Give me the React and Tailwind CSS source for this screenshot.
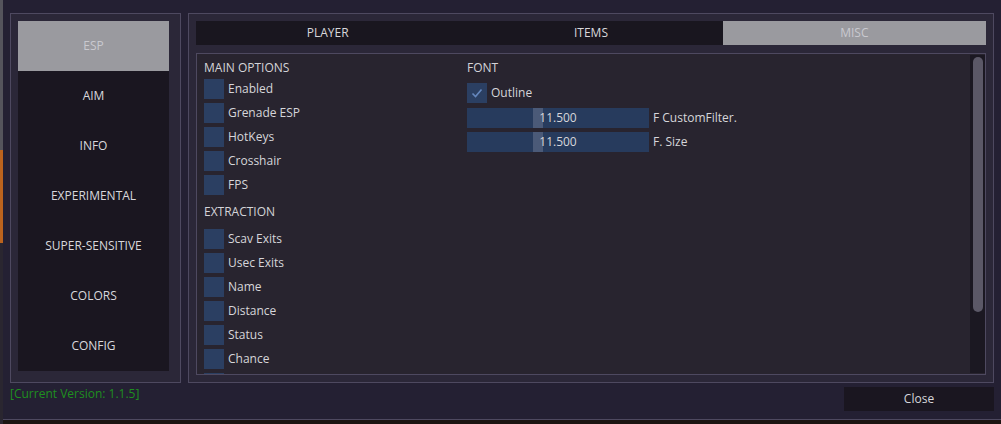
const NAV = ["ESP", "AIM", "INFO", "EXPERIMENTAL", "SUPER-SENSITIVE", "COLORS", "CONFIG"];
const TABS = ["PLAYER", "ITEMS", "MISC"];
const MAIN = ["Enabled", "Grenade ESP", "HotKeys", "Crosshair", "FPS"];
const EXTRACTION = ["Scav Exits", "Usec Exits", "Name", "Distance", "Status", "Chance"];

const Check = ({ label, checked }) => (
  <div className="flex items-center gap-[4px] h-[20px] shrink-0">
    <div className="w-[20px] h-[20px] bg-[#2b3f62] flex items-center justify-center shrink-0">
      {checked && (
        <svg width="14" height="14" viewBox="0 0 14 14">
          <path d="M2.5 7.5 L5.5 10.5 L11.5 3.5" fill="none" stroke="#6587bd" strokeWidth="1.6" />
        </svg>
      )}
    </div>
    {label && <span className="text-[12px] leading-[16px] text-[#d6d6da]">{label}</span>}
  </div>
);

const Slider = ({ value, label }) => (
  <div className="flex items-center gap-[4px] h-[20px]">
    <div className="relative w-[182px] h-[20px] bg-[#273b5d] flex items-center justify-center">
      <div className="absolute left-[66px] top-0 w-[10px] h-[20px] bg-[#4b5a78]" />
      <span className="relative text-[12px] leading-[16px] text-[#d6d6da]">{value}</span>
    </div>
    <span className="text-[12px] leading-[16px] text-[#d6d6da]">{label}</span>
  </div>
);

export default function App() {
  return (
    <div
      className="flex w-[1001px] h-[424px] overflow-hidden bg-[#1c1512]"
      style={{ fontFamily: '"Open Sans", "Noto Sans", sans-serif' }}
    >
      <div className="w-[3px] flex flex-col">
        <div className="h-[150px] bg-[#55545c]" />
        <div className="h-[93px] bg-[#bb631e]" />
        <div className="flex-1 bg-[#2a2630]" />
      </div>

      <div className="w-[998px] h-[420px] bg-[#242033] border-b border-[#4e4960] flex flex-col pt-[13px] px-[7px]">
        <div className="flex gap-[7px] h-[370px]">
          {/* left nav */}
          <div className="w-[171px] border border-[#4e4960] bg-[#2b2738] pl-[7px] pr-[11px] pt-[7px]">
            {NAV.map((n, i) => (
              <div
                key={n}
                className={
                  i === 0
                    ? "h-[50px] flex items-center justify-center bg-[#9a9a9f] text-[#c9c9cf] text-[12px]"
                    : "h-[50px] flex items-center justify-center bg-[#1a1620] text-[#d8d8dc] text-[12px]"
                }
              >
                {n}
              </div>
            ))}
          </div>

          {/* right panel */}
          <div className="w-[806px] border border-[#4e4960] bg-[#2b2738] px-[7px] pt-[7px] pb-[7px] flex flex-col gap-[8px]">
            <div className="grid grid-cols-3 h-[24px] bg-[#19161f] shrink-0">
              {TABS.map((t, i) => (
                <div
                  key={t}
                  className={
                    i === 2
                      ? "flex items-center justify-center bg-[#9a9a9f] text-[#c9c9cf] text-[12px]"
                      : "flex items-center justify-center text-[#d8d8dc] text-[12px]"
                  }
                >
                  {t}
                </div>
              ))}
            </div>

            <div className="flex-1 border border-[#4e4960] bg-[#28242f] flex overflow-hidden">
              <div className="w-[270px] pl-[7px] pt-[6px] flex flex-col overflow-hidden">
                <div className="text-[12px] leading-[16px] text-[#d4d4d8]">MAIN OPTIONS</div>
                <div className="mt-[3px] flex flex-col gap-[4px]">
                  {MAIN.map((m) => (
                    <Check key={m} label={m} />
                  ))}
                </div>
                <div className="mt-[9px] text-[12px] leading-[16px] text-[#d4d4d8]">EXTRACTION</div>
                <div className="mt-[9px] flex flex-col gap-[4px]">
                  {EXTRACTION.map((m) => (
                    <Check key={m} label={m} />
                  ))}
                  {/* next row, scrolled out of view */}
                  <Check />
                </div>
              </div>

              <div className="flex-1 pt-[6px] flex flex-col">
                <div className="text-[12px] leading-[16px] text-[#d4d4d8]">FONT</div>
                <div className="mt-[7px]">
                  <Check label="Outline" checked />
                </div>
                <div className="mt-[5px] flex flex-col gap-[4px]">
                  <Slider value="11.500" label="F CustomFilter." />
                  <Slider value="11.500" label="F. Size" />
                </div>
              </div>

              <div className="w-[15px] my-[1px] bg-[#1b1822] pl-[3px] pr-[2px] pt-[2px]">
                <div className="h-[255px] rounded-full bg-[#5b5867]" />
              </div>
            </div>
          </div>
        </div>

        <div className="flex items-start">
          <div className="mt-[3px] text-[12px] leading-[16px] text-[#1f8f1f]">[Current Version: 1.1.5]</div>
          <div className="ml-auto mt-[4px] w-[150px] h-[24px] bg-[#1a1620] flex items-center justify-center text-[12px] text-[#d6d6da]">
            Close
          </div>
        </div>
      </div>
    </div>
  );
}
